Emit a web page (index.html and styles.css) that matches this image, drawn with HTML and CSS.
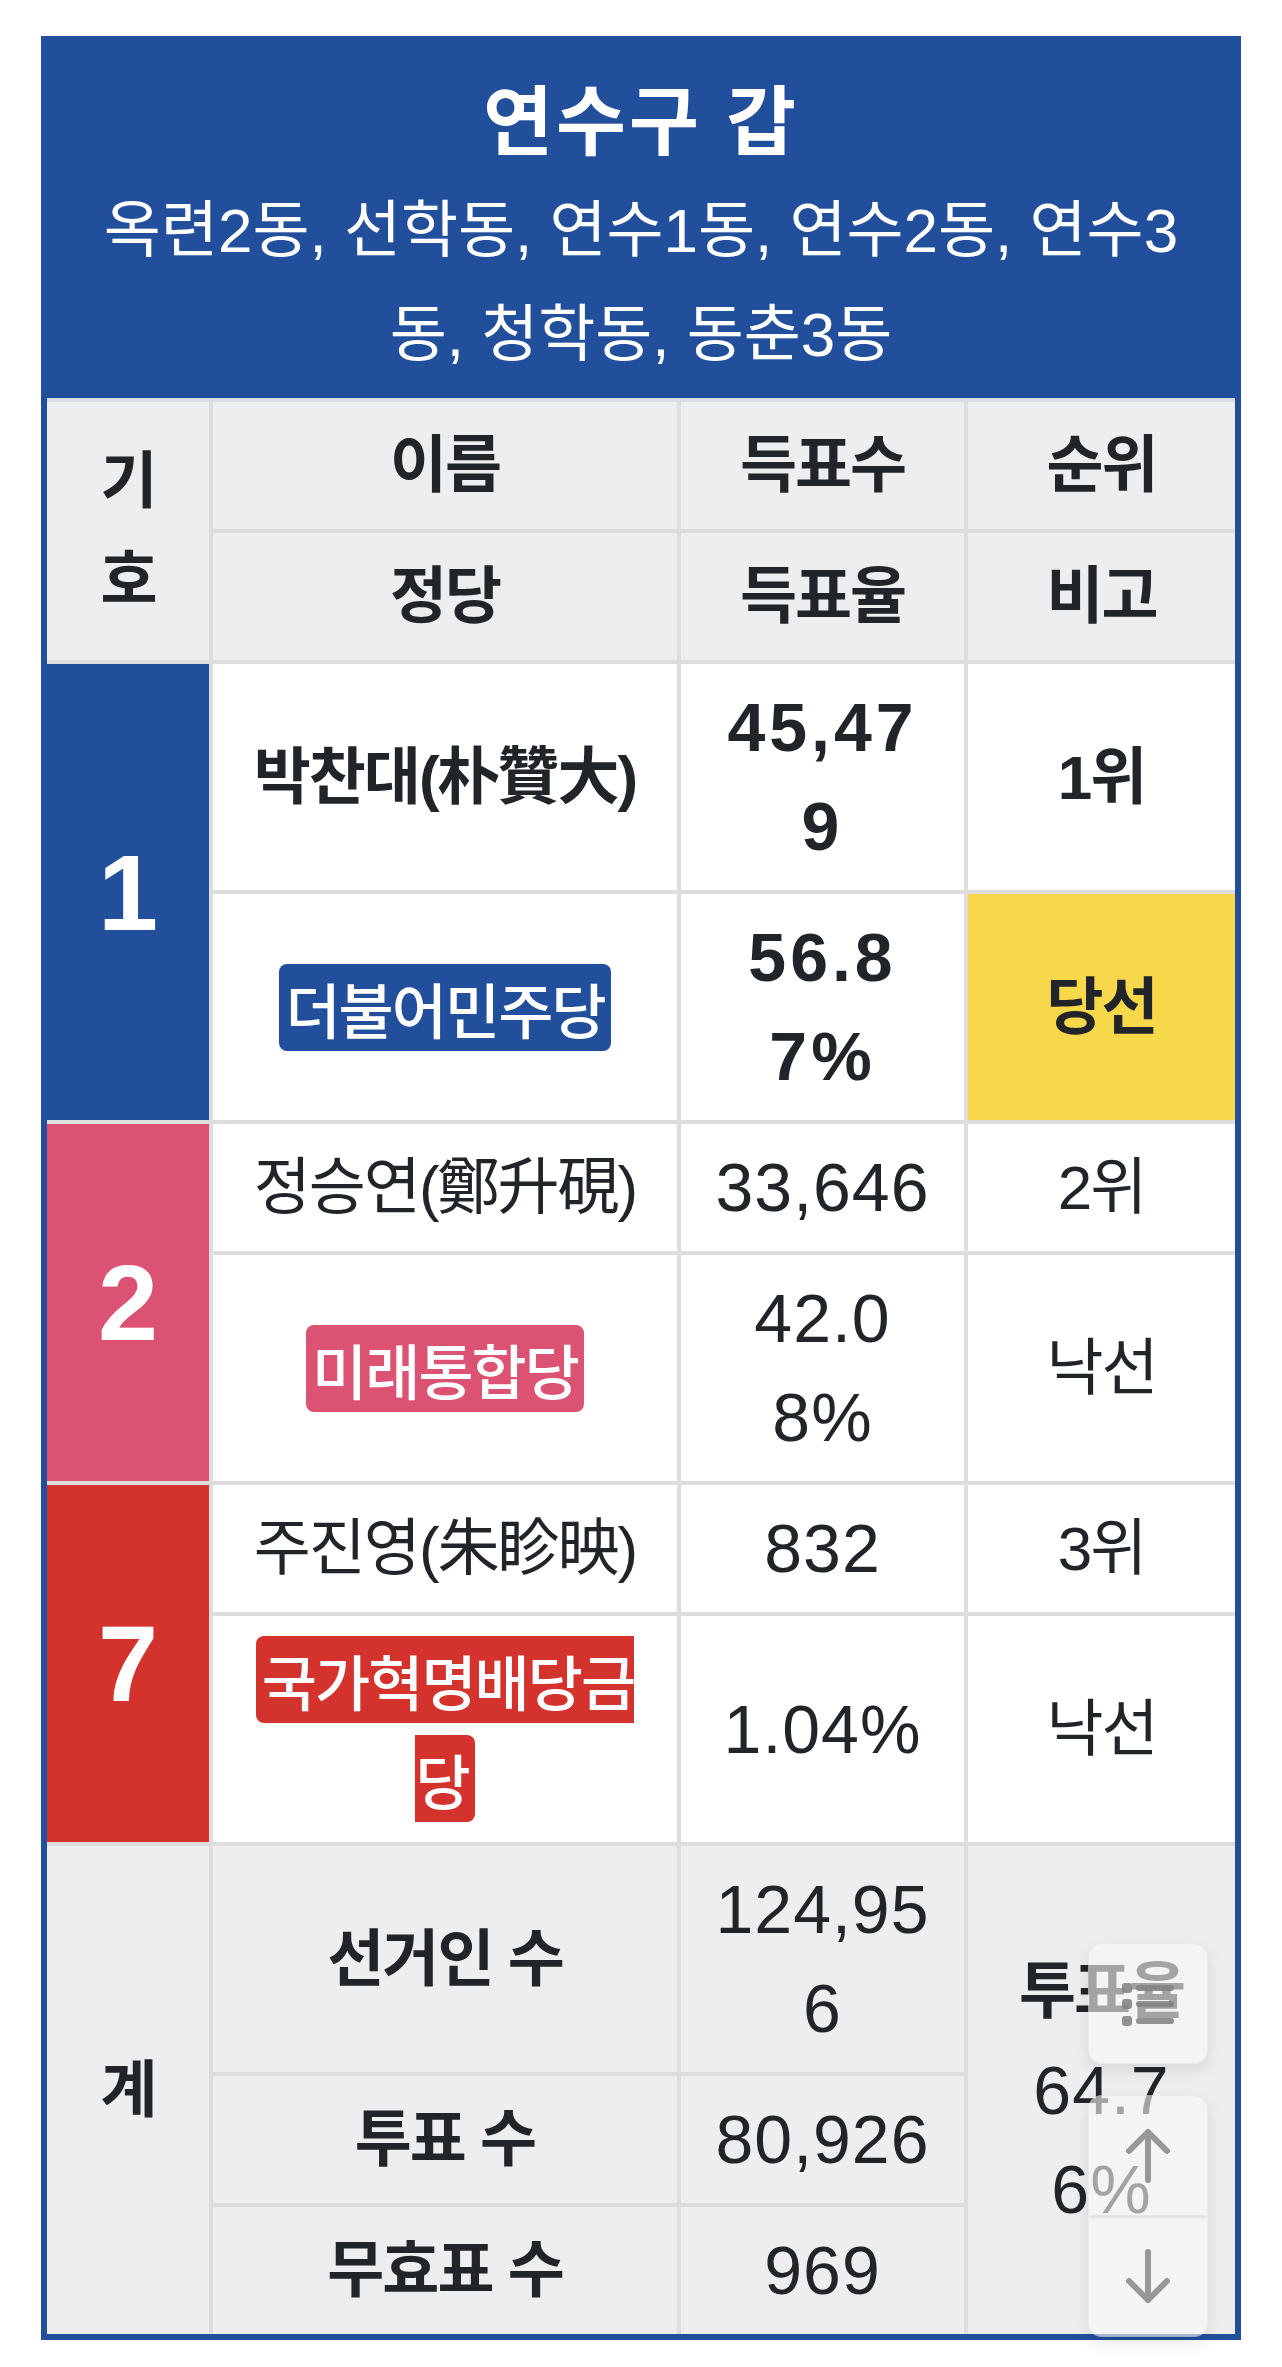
FILE: index.html
```html
<!DOCTYPE html>
<html lang="ko">
<head>
<meta charset="utf-8">
<title>연수구 갑</title>
<link rel="stylesheet" href="styles.css">
</head>
<body>
<div class="box">
  <div class="head">
    <div class="title">연수구 갑</div>
    <div class="sub">옥련2동, 선학동, 연수1동, 연수2동, 연수3동, 청학동, 동춘3동</div>
  </div>
  <div class="grid">
    <div class="c th col1 span2">기호</div>
    <div class="c th col2">이름</div>
    <div class="c th col3">득표수</div>
    <div class="c th col4">순위</div>
    <div class="c th col2">정당</div>
    <div class="c th col3">득표율</div>
    <div class="c th col4">비고</div>

    <div class="c pn blue col1 span2">1</div>
    <div class="c b col2">박찬대(朴贊大)</div>
    <div class="c n b col3">45,479</div>
    <div class="c b col4">1위</div>
    <div class="c col2"><div class="party"><span class="badge blue">더불어민주당</span></div></div>
    <div class="c n b col3">56.87%</div>
    <div class="c b col4 win">당선</div>

    <div class="c pn pink col1 span2">2</div>
    <div class="c col2">정승연(鄭升硯)</div>
    <div class="c n col3">33,646</div>
    <div class="c col4">2위</div>
    <div class="c col2"><div class="party"><span class="badge pink">미래통합당</span></div></div>
    <div class="c n col3">42.08%</div>
    <div class="c col4">낙선</div>

    <div class="c pn red col1 span2">7</div>
    <div class="c col2">주진영(朱眕映)</div>
    <div class="c n col3">832</div>
    <div class="c col4">3위</div>
    <div class="c col2"><div class="party"><span class="badge red">국가혁명배당금당</span></div></div>
    <div class="c n col3">1.04%</div>
    <div class="c col4">낙선</div>

    <div class="c th col1 span3">계</div>
    <div class="c th col2">선거인 수</div>
    <div class="c n tot col3">124,956</div>
    <div class="c n tot col4 span3"><div class="rate"><div class="rate-label">투표율</div>64.76%</div></div>
    <div class="c th col2">투표 수</div>
    <div class="c n tot col3">80,926</div>
    <div class="c th col2">무효표 수</div>
    <div class="c n tot col3">969</div>
  </div>
</div>

<div class="fab fab-toc">
  <svg width="52" height="44" viewBox="0 0 52 44" aria-hidden="true">
    <rect x="0" y="1" width="10" height="10" rx="3"/>
    <rect x="0" y="17" width="10" height="10" rx="3"/>
    <rect x="0" y="34" width="10" height="10" rx="3"/>
    <rect x="14" y="3" width="38" height="6" rx="3"/>
    <rect x="14" y="19" width="38" height="6" rx="3"/>
    <rect x="14" y="36" width="38" height="6" rx="3"/>
  </svg>
</div>
<div class="fab fab-nav">
  <div class="fab-half">
    <svg width="50" height="56" viewBox="0 0 50 56" aria-hidden="true"><path d="M25 53 V5 M6 24 L25 5 L44 24"/></svg>
  </div>
  <div class="fab-half fab-lower">
    <svg width="50" height="56" viewBox="0 0 50 56" aria-hidden="true"><path d="M25 3 V51 M6 32 L25 51 L44 32"/></svg>
  </div>
</div>
</body>
</html>
```
FILE: styles.css
```css
html, body {
  margin: 0;
  padding: 0;
  background: #ffffff;
}

body {
  font-family: "Liberation Sans", "Noto Sans CJK KR", sans-serif;
  color: #212529;
}

.box {
  box-sizing: border-box;
  width: 1200px;
  margin: 36px 41px 0;
  border: 6px solid #214f9c;
  background: #214f9c;
}

.head {
  color: #ffffff;
  text-align: center;
  padding: 25px 30px 11px;
}

.title {
  font-size: 76px;
  font-weight: 700;
  line-height: 112px;
  letter-spacing: 3px;
}

.sub {
  font-size: 62px;
  line-height: 104px;
  letter-spacing: 0;
}

.grid {
  display: grid;
  grid-template-columns: 162px 464px 283px 267px;
  gap: 4px;
  background: #dddddd;
  border-top: 4px solid #d8dce4;
}

.c {
  display: flex;
  align-items: center;
  justify-content: center;
  text-align: center;
  padding: 14px 30px;
  font-size: 62px;
  line-height: 99px;
  letter-spacing: -2px;
  background: #ffffff;
  word-break: break-all;
}

.col1, .col3, .col4 { padding-left: 30px; padding-right: 30px; }
.col2 { padding-left: 26px; padding-right: 26px; }

.span2 { grid-row: span 2; }
.span3 { grid-row: span 3; }

.th {
  background: #eeeeee;
  font-weight: 700;
}

.b { font-weight: 700; }

.n {
  font-size: 68px;
  letter-spacing: 1px;
}
.n.b { letter-spacing: 4px; }

.tot { background: #eeeeee; }

.rate-label {
  font-size: 62px;
  font-weight: 700;
  letter-spacing: -2px;
}

.pn {
  font-size: 108px;
  font-weight: 700;
  color: #ffffff;
  letter-spacing: 0;
}

.pn.blue { background: #214f9c; }
.pn.pink { background: #dc5272; }
.pn.red { background: #d3322d; }

.win { background: #f8d84b; }

.party {
  font-family: "Noto Sans CJK KR", sans-serif;
  font-size: 60px;
  line-height: 99px;
  text-align: center;
}

.badge {
  font-weight: 500;
  color: #ffffff;
  padding: 0 6px;
  border-radius: 8px;
}
.badge.blue { background: #214f9c; }
.badge.pink { background: #dc5272; }
.badge.red { background: #d3322d; }

.fab {
  position: fixed;
  right: 74px;
  width: 120px;
  box-sizing: border-box;
  border-radius: 14px;
  background: rgba(248, 248, 249, 0.6);
  border: 1px solid rgba(0, 0, 0, 0.04);
  box-shadow: 0 6px 16px rgba(0, 0, 0, 0.10);
}

.fab svg rect { fill: rgba(128, 128, 128, 0.85); }
.fab svg path {
  fill: none;
  stroke: rgba(140, 140, 140, 0.9);
  stroke-width: 6;
  stroke-linecap: round;
  stroke-linejoin: round;
}

.fab-toc {
  bottom: 303px;
  height: 121px;
  display: flex;
  align-items: center;
  justify-content: center;
}

.fab-nav {
  bottom: 30px;
  height: 242px;
  display: flex;
  flex-direction: column;
}

.fab-half {
  flex: 1;
  display: flex;
  align-items: center;
  justify-content: center;
}

.fab-lower {
  border-top: 3px solid rgba(225, 225, 228, 0.8);
}
```
